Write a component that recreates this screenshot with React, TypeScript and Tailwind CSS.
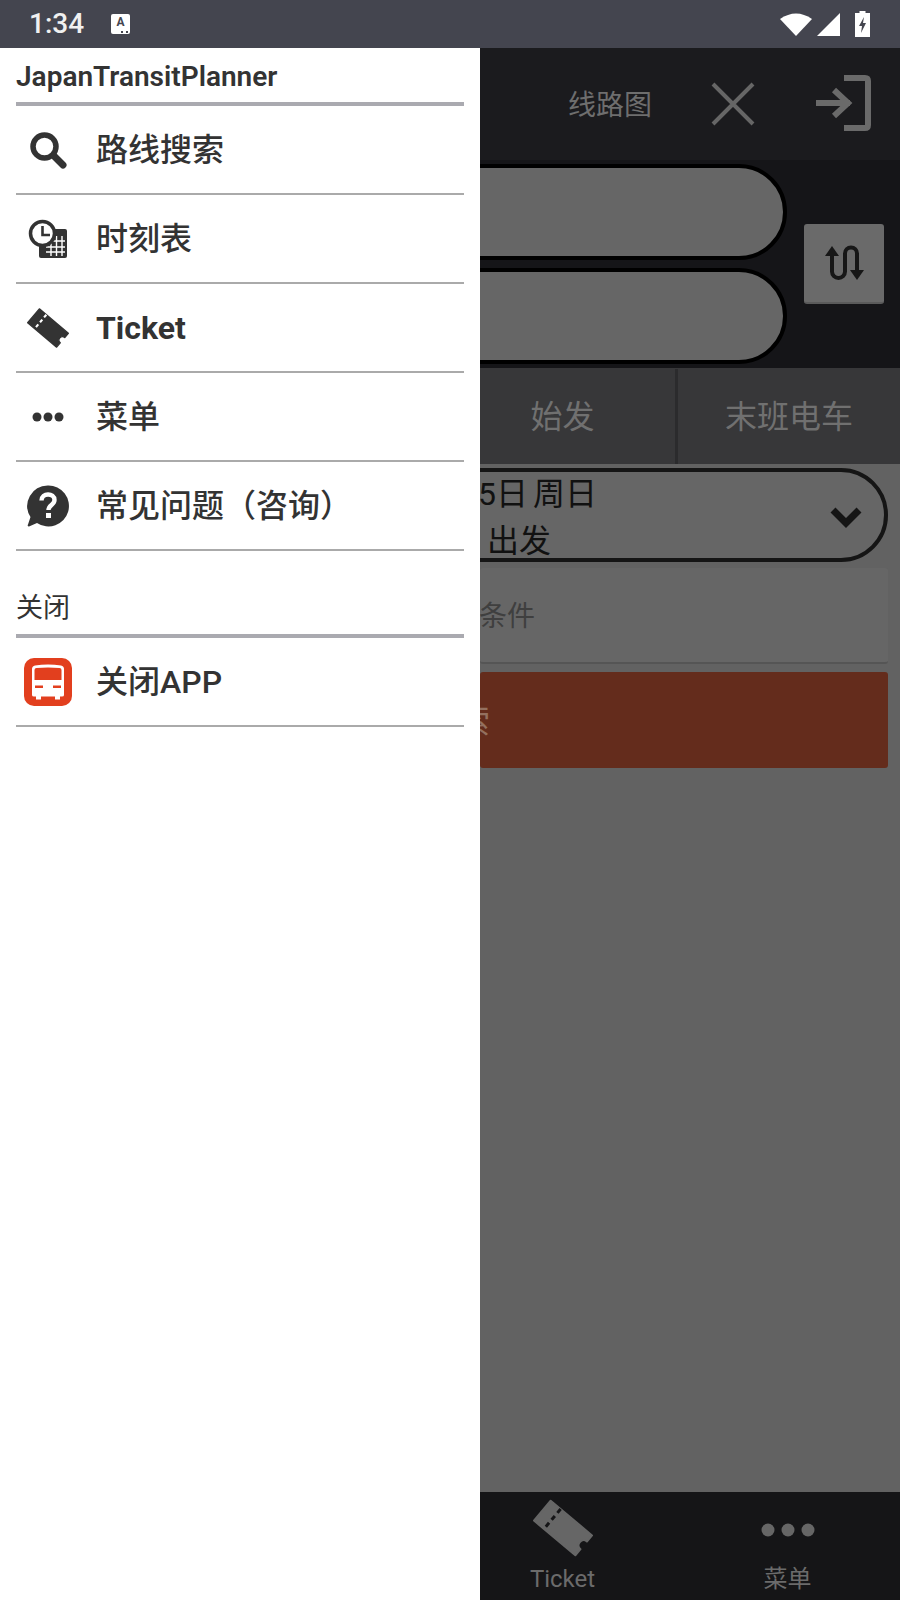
import React from "react";

const TicketIcon = ({ size, fill, gap }: { size: number; fill: string; gap: string }) => (
  <svg viewBox="0 0 60 60" width={size} height={size}>
    <g transform="translate(30 30) rotate(40)">
      <path d="M-27 -13H27V-5A5 5 0 0 0 27 5V13H-27Z" fill={fill} stroke={fill} strokeWidth="2" strokeLinejoin="round" />
      <path d="M-14 -14V14" stroke={gap} strokeWidth="3" strokeDasharray="5 4" strokeDashoffset="-1" />
    </g>
  </svg>
);

const SearchIcon = () => (
  <svg viewBox="0 0 38 38" width="38" height="38" fill="none" stroke="#333">
    <circle cx="15.5" cy="15.5" r="11.5" strokeWidth="5.5" />
    <path d="M25 25L34 34" strokeWidth="7" strokeLinecap="round" />
  </svg>
);

const TimetableIcon = () => (
  <svg viewBox="0 0 40 40" width="40" height="40">
    <rect x="11" y="10" width="28" height="29" rx="2" fill="#333" />
    <path d="M18 22H37M18 28H37M18 33H37M23 17V37M28.500 17V37M34 17V37" stroke="#fff" strokeWidth="1.400" />
    <circle cx="14.500" cy="14.500" r="12" fill="#fff" stroke="#333" strokeWidth="3.500" />
    <path d="M14.500 7V16H22" fill="none" stroke="#333" strokeWidth="2.600" />
  </svg>
);

const DotsIcon = () => (
  <svg viewBox="0 0 32 10" width="32" height="10" fill="#333">
    <circle cx="5" cy="5" r="4.500" />
    <circle cx="16" cy="5" r="4.500" />
    <circle cx="27" cy="5" r="4.500" />
  </svg>
);

const HelpIcon = () => (
  <svg viewBox="0 0 42 42" width="42" height="42">
    <path d="M21 0.500A20.500 20.500 0 1 1 10 38L2 41.500Q0 41.500 1 39.500L3.500 32A20.500 20.500 0 0 1 21 0.500Z" fill="#333" />
    <path d="M14.500 15.500C14.500 7.500 27.500 7.500 27.500 15C27.500 20 21.500 20 21.500 25" fill="none" stroke="#fff" strokeWidth="4.400" />
    <rect x="19" y="28" width="5" height="5" fill="#fff" />
  </svg>
);

const TrainIcon = () => (
  <svg viewBox="0 0 48 48" width="48" height="48">
    <rect width="48" height="48" rx="10" fill="#e23f1e" />
    <path d="M8 11Q8 8 11 7.500Q24 5.500 37 7.500Q40 8 40 11V37Q40 38.500 38 38.500H10Q8 38.500 8 37Z" fill="#fff" />
    <path d="M12 38H17V41.500H12ZM31 38H36V41.500H31Z" fill="#fff" />
    <path d="M10.500 12Q10.500 10 12.500 10Q24 9 35.500 10Q37.500 10 37.500 12V22H10.500Z" fill="#e23f1e" />
    <rect x="11" y="27.500" width="8" height="2.500" fill="#e23f1e" />
    <rect x="29" y="27.500" width="8" height="2.500" fill="#e23f1e" />
  </svg>
);

const menuItems = [
  { label: "路线搜索", icon: <SearchIcon /> },
  { label: "时刻表", icon: <TimetableIcon /> },
  { label: "Ticket", icon: <TicketIcon size={42} fill="#333" gap="#fff" />, bold: true },
  { label: "菜单", icon: <DotsIcon /> },
  { label: "常见问题（咨询）", icon: <HelpIcon /> },
];

const DrawerRow = ({ label, icon, bold }: { label: string; icon: React.ReactNode; bold?: boolean }) => (
  <div className="flex h-[89px] items-center border-b-2 border-[#aaaaaa]">
    <div className="flex w-[64px] shrink-0 items-center justify-center">{icon}</div>
    <span className={`ml-[16px] text-[32px] text-[#333] ${bold ? "font-bold" : "font-medium"}`}>{label}</span>
  </div>
);

const Drawer = () => (
  <aside className="flex w-[480px] shrink-0 flex-col bg-white px-4">
    <div className="flex h-[58px] items-center border-b-4 border-[#aaaab0] pt-[3px] text-[28px] leading-none font-semibold text-[#333]">
      <span>JapanTransitPlanner</span>
    </div>
    {menuItems.map((item) => (
      <DrawerRow key={item.label} {...item} />
    ))}
    <div className="flex h-[87px] items-end border-b-4 border-[#aaaab0] pb-[6px] text-[27px] leading-[40px] font-normal text-[#333]">
      关闭
    </div>
    <DrawerRow label="关闭APP" icon={<TrainIcon />} />
  </aside>
);

const StatusBar = () => (
  <div className="flex h-[48px] shrink-0 items-center bg-[#44454f] pr-[30px] pl-[29px] text-white">
    <span className="text-[28px] leading-none font-medium text-[#f0f0f0]">1:34</span>
    <div className="relative ml-[27px] flex h-[20px] w-[19px] items-start justify-center rounded-[2px] bg-white text-[12px] leading-[16px] font-bold text-[#44454f]">
      A
      <span className="absolute right-[2px] bottom-[1px] w-[7px] border-b-2 border-dotted border-[#44454f]" />
    </div>
    <div className="ml-auto flex items-center">
      <svg viewBox="0 0 32 24" width="32" height="24" fill="#fff">
        <path d="M0 7Q16 -4 32 7L16 24Z" />
      </svg>
      <svg viewBox="0 0 23 23" width="23" height="23" fill="#fff" className="ml-[5px]">
        <path d="M0 23L23 0V23Z" />
      </svg>
      <svg viewBox="0 0 15 26" width="15" height="26" className="ml-[15px]">
        <path d="M4.500 0H10.500V2H15V26H0V2H4.500Z" fill="#fff" />
        <path d="M9 6L4 15H7L6 22L11 12H8Z" fill="#44454f" />
      </svg>
    </div>
  </div>
);

const Backdrop = () => (
  <main className="flex min-w-0 flex-1 flex-col overflow-hidden bg-[#626262]">
    <header className="flex h-[112px] shrink-0 items-center bg-[#1b1b1e] pl-[88px]">
      <span className="w-[84px] pt-[3px] text-[28px] leading-none font-normal whitespace-nowrap text-[#6e6e6e]">线路图</span>
      <svg viewBox="0 0 44 44" width="44" height="44" fill="none" stroke="#666" strokeWidth="4" className="ml-[59px]">
        <path d="M2 2L42 42M42 2L2 42" />
      </svg>
      <svg viewBox="0 0 56 56" width="56" height="56" fill="none" stroke="#6a6a6a" strokeWidth="6" className="-mt-[2px] ml-[60px]">
        <path d="M29 3H50Q53 3 53 6V50Q53 53 50 53H29" />
        <path d="M1 28H35M19 15L33 28L19 41" />
      </svg>
    </header>

    <section className="flex h-[208px] shrink-0 items-center bg-[#151518]">
      <div className="-ml-[60px] flex w-[367px] shrink-0 flex-col gap-2">
        <div className="h-[96px] rounded-full border-4 border-black bg-[#666]" />
        <div className="h-[96px] rounded-full border-4 border-black bg-[#666]" />
      </div>
      <button className="ml-[17px] flex h-[80px] w-[80px] shrink-0 items-center justify-center rounded-[3px] border-b-2 border-[#5a5a5a] bg-[#6a6a6a]">
        <svg viewBox="0 0 40 40" width="40" height="40" fill="none" stroke="#171717" strokeWidth="4">
          <path d="M8 10V28.500A6.500 6.500 0 0 0 21 28.500V10.500A6 6 0 0 1 33 10.500V28" />
          <path d="M8 3L15 13H1Z" fill="#171717" stroke="none" />
          <path d="M33 37L26 27H40Z" fill="#171717" stroke="none" />
        </svg>
      </button>
    </section>

    <nav className="-ml-[30px] grid h-[96px] w-[450px] shrink-0 grid-cols-2 bg-[#373739] pt-[1px] text-[32px] leading-none text-[#707070]">
      <div className="flex items-center justify-center">始发</div>
      <div className="flex items-center justify-center border-l-[3px] border-[#2b2b2d]">末班电车</div>
    </nav>

    <div className="flex flex-1 flex-col pt-[4px] pr-3">
      <div className="-ml-[60px] flex h-[94px] items-center rounded-full border-4 border-[#151515] bg-[#666] pr-[22px] pl-[54px] text-[32px] leading-[47px] text-[#111]">
        <div className="mt-[5px] flex-1 whitespace-nowrap [word-spacing:-3px]">
          <div>5日 周日</div>
          <div className="ml-[9px]">出发</div>
        </div>
        <svg viewBox="0 0 32 24" width="32" height="24" fill="none" stroke="#151515" strokeWidth="7" className="mt-[4px]">
          <path d="M3 5L16 18L29 5" />
        </svg>
      </div>
      <div className="mt-[6px] flex h-[96px] items-center rounded-[3px] border-b-2 border-[#555] bg-[#666] pt-[3px] text-[28px] leading-none whitespace-nowrap text-[#3f3f3f]">
        <span className="-ml-[1px]">条件</span>
      </div>
      <div className="mt-[8px] flex h-[96px] items-center overflow-hidden rounded-[3px] bg-[#642c1c] pt-[3px] text-[33px] leading-none whitespace-nowrap text-[#93705f]">
        <span className="-ml-[56px]">搜索</span>
      </div>
    </div>

    <footer className="-ml-[30px] grid h-[108px] w-[450px] shrink-0 grid-cols-2 bg-[#151517] text-[#6b6b6b]">
      <div className="flex flex-col items-center">
        <div className="mt-[6px]">
          <TicketIcon size={60} fill="#666" gap="#151517" />
        </div>
        <span className="mt-[9px] text-[24px] leading-none">Ticket</span>
      </div>
      <div className="flex flex-col items-center">
        <svg viewBox="0 0 54 14" width="54" height="14" fill="#666" className="mt-[31px]">
          <circle cx="7" cy="7" r="6.500" />
          <circle cx="27" cy="7" r="6.500" />
          <circle cx="47" cy="7" r="6.500" />
        </svg>
        <span className="mt-[30px] text-[24px] leading-none">菜单</span>
      </div>
    </footer>
  </main>
);

export default function App() {
  return (
    <div className="flex h-[1600px] w-[900px] flex-col overflow-hidden font-['Roboto','Noto_Sans_CJK_SC',sans-serif]">
      <StatusBar />
      <div className="flex min-h-0 flex-1">
        <Drawer />
        <Backdrop />
      </div>
    </div>
  );
}
